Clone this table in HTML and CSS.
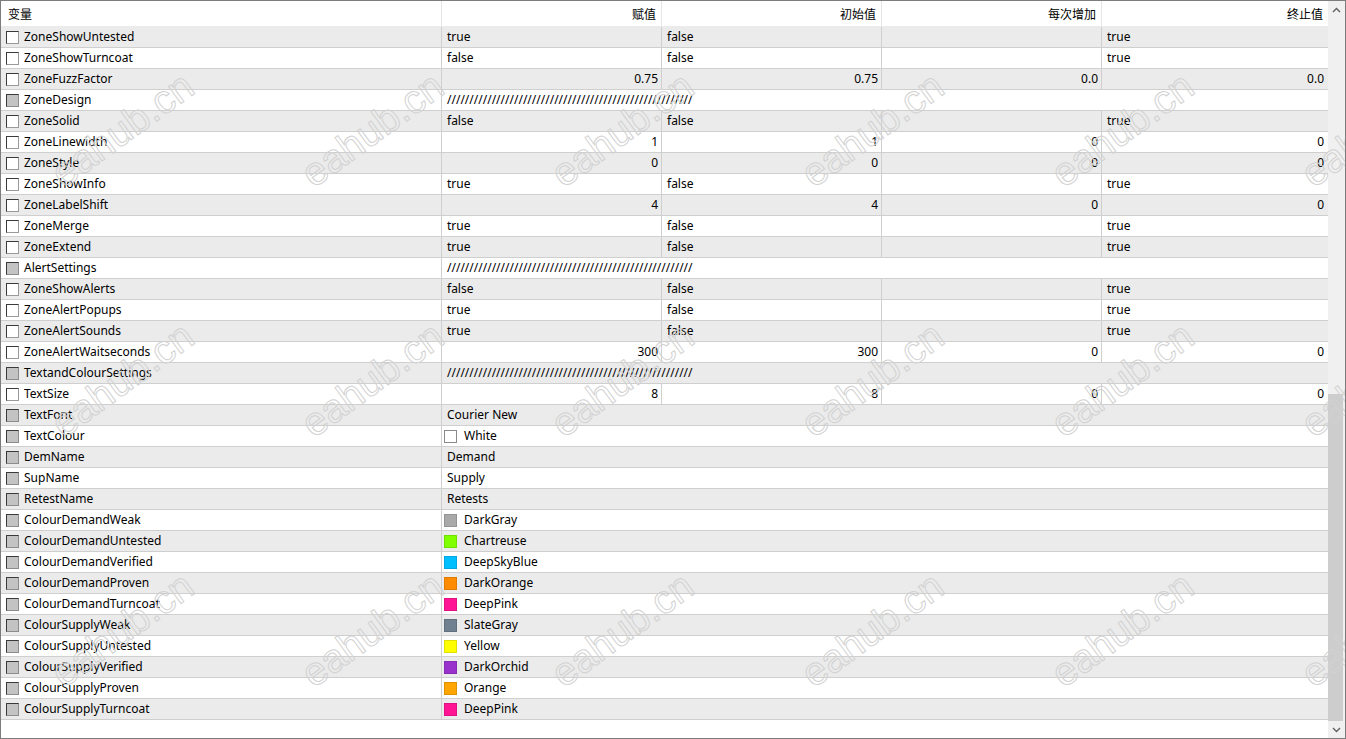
FILE: index.html
```html
<!DOCTYPE html>
<html>
<head>
<meta charset="utf-8">
<link rel="stylesheet" href="styles.css">
</head>
<body>
<div class="window">
  <div class="main">
    <div class="table">
      <div class="header">
        <div class="hc first">变量</div>
        <div class="hc">赋值</div>
        <div class="hc">初始值</div>
        <div class="hc">每次增加</div>
        <div class="hc last">终止值</div>
      </div>
      <div class="rows">
        <div class="row"><div class="c name"><span class="cb"></span>ZoneShowUntested</div><div class="c v">true</div><div class="c v">false</div><div class="c v"></div><div class="c v last">true</div></div>
        <div class="row"><div class="c name"><span class="cb"></span>ZoneShowTurncoat</div><div class="c v">false</div><div class="c v">false</div><div class="c v"></div><div class="c v last">true</div></div>
        <div class="row"><div class="c name"><span class="cb"></span>ZoneFuzzFactor</div><div class="c n">0.75</div><div class="c n">0.75</div><div class="c n">0.0</div><div class="c n last">0.0</div></div>
        <div class="row"><div class="c name"><span class="cb dis"></span>ZoneDesign</div><div class="c span">///////////////////////////////////////////////////////</div></div>
        <div class="row"><div class="c name"><span class="cb"></span>ZoneSolid</div><div class="c v">false</div><div class="c v">false</div><div class="c v"></div><div class="c v last">true</div></div>
        <div class="row"><div class="c name"><span class="cb"></span>ZoneLinewidth</div><div class="c n">1</div><div class="c n">1</div><div class="c n">0</div><div class="c n last">0</div></div>
        <div class="row"><div class="c name"><span class="cb"></span>ZoneStyle</div><div class="c n">0</div><div class="c n">0</div><div class="c n">0</div><div class="c n last">0</div></div>
        <div class="row"><div class="c name"><span class="cb"></span>ZoneShowInfo</div><div class="c v">true</div><div class="c v">false</div><div class="c v"></div><div class="c v last">true</div></div>
        <div class="row"><div class="c name"><span class="cb"></span>ZoneLabelShift</div><div class="c n">4</div><div class="c n">4</div><div class="c n">0</div><div class="c n last">0</div></div>
        <div class="row"><div class="c name"><span class="cb"></span>ZoneMerge</div><div class="c v">true</div><div class="c v">false</div><div class="c v"></div><div class="c v last">true</div></div>
        <div class="row"><div class="c name"><span class="cb"></span>ZoneExtend</div><div class="c v">true</div><div class="c v">false</div><div class="c v"></div><div class="c v last">true</div></div>
        <div class="row"><div class="c name"><span class="cb dis"></span>AlertSettings</div><div class="c span">///////////////////////////////////////////////////////</div></div>
        <div class="row"><div class="c name"><span class="cb"></span>ZoneShowAlerts</div><div class="c v">false</div><div class="c v">false</div><div class="c v"></div><div class="c v last">true</div></div>
        <div class="row"><div class="c name"><span class="cb"></span>ZoneAlertPopups</div><div class="c v">true</div><div class="c v">false</div><div class="c v"></div><div class="c v last">true</div></div>
        <div class="row"><div class="c name"><span class="cb"></span>ZoneAlertSounds</div><div class="c v">true</div><div class="c v">false</div><div class="c v"></div><div class="c v last">true</div></div>
        <div class="row"><div class="c name"><span class="cb"></span>ZoneAlertWaitseconds</div><div class="c n">300</div><div class="c n">300</div><div class="c n">0</div><div class="c n last">0</div></div>
        <div class="row"><div class="c name"><span class="cb dis"></span>TextandColourSettings</div><div class="c span">///////////////////////////////////////////////////////</div></div>
        <div class="row"><div class="c name"><span class="cb"></span>TextSize</div><div class="c n">8</div><div class="c n">8</div><div class="c n">0</div><div class="c n last">0</div></div>
        <div class="row"><div class="c name"><span class="cb dis"></span>TextFont</div><div class="c span">Courier New</div></div>
        <div class="row"><div class="c name"><span class="cb dis"></span>TextColour</div><div class="c span color"><span class="sw white"></span>White</div></div>
        <div class="row"><div class="c name"><span class="cb dis"></span>DemName</div><div class="c span">Demand</div></div>
        <div class="row"><div class="c name"><span class="cb dis"></span>SupName</div><div class="c span">Supply</div></div>
        <div class="row"><div class="c name"><span class="cb dis"></span>RetestName</div><div class="c span">Retests</div></div>
        <div class="row"><div class="c name"><span class="cb dis"></span>ColourDemandWeak</div><div class="c span color"><span class="sw darkgray"></span>DarkGray</div></div>
        <div class="row"><div class="c name"><span class="cb dis"></span>ColourDemandUntested</div><div class="c span color"><span class="sw chartreuse"></span>Chartreuse</div></div>
        <div class="row"><div class="c name"><span class="cb dis"></span>ColourDemandVerified</div><div class="c span color"><span class="sw deepskyblue"></span>DeepSkyBlue</div></div>
        <div class="row"><div class="c name"><span class="cb dis"></span>ColourDemandProven</div><div class="c span color"><span class="sw darkorange"></span>DarkOrange</div></div>
        <div class="row"><div class="c name"><span class="cb dis"></span>ColourDemandTurncoat</div><div class="c span color"><span class="sw deeppink"></span>DeepPink</div></div>
        <div class="row"><div class="c name"><span class="cb dis"></span>ColourSupplyWeak</div><div class="c span color"><span class="sw slategray"></span>SlateGray</div></div>
        <div class="row"><div class="c name"><span class="cb dis"></span>ColourSupplyUntested</div><div class="c span color"><span class="sw yellow"></span>Yellow</div></div>
        <div class="row"><div class="c name"><span class="cb dis"></span>ColourSupplyVerified</div><div class="c span color"><span class="sw darkorchid"></span>DarkOrchid</div></div>
        <div class="row"><div class="c name"><span class="cb dis"></span>ColourSupplyProven</div><div class="c span color"><span class="sw orange"></span>Orange</div></div>
        <div class="row"><div class="c name"><span class="cb dis"></span>ColourSupplyTurncoat</div><div class="c span color"><span class="sw deeppink"></span>DeepPink</div></div>
      </div>
    </div>
    <div class="scrollbar">
      <div class="sbtn"><svg width="9" height="6" viewBox="0 0 9 6"><path d="M1 5 L4.5 1.5 L8 5" fill="none" stroke="#606060" stroke-width="1.4"/></svg></div>
      <div class="track"><div class="thumb"></div></div>
      <div class="sbtn"><svg width="9" height="6" viewBox="0 0 9 6"><path d="M1 1 L4.5 4.5 L8 1" fill="none" stroke="#606060" stroke-width="1.4"/></svg></div>
    </div>
  </div>
  <div class="watermarks">
    <div class="wm"><span>eahub.cn</span></div><div class="wm"><span>eahub.cn</span></div><div class="wm"><span>eahub.cn</span></div><div class="wm"><span>eahub.cn</span></div><div class="wm"><span>eahub.cn</span></div><div class="wm"><span>eahub.cn</span></div>
    <div class="wm"><span>eahub.cn</span></div><div class="wm"><span>eahub.cn</span></div><div class="wm"><span>eahub.cn</span></div><div class="wm"><span>eahub.cn</span></div><div class="wm"><span>eahub.cn</span></div><div class="wm"><span>eahub.cn</span></div>
    <div class="wm"><span>eahub.cn</span></div><div class="wm"><span>eahub.cn</span></div><div class="wm"><span>eahub.cn</span></div><div class="wm"><span>eahub.cn</span></div><div class="wm"><span>eahub.cn</span></div><div class="wm"><span>eahub.cn</span></div>
  </div>
</div>
</body>
</html>
```

FILE: styles.css
```css
html, body {
  margin: 0;
  padding: 0;
  background: #ffffff;
}

.window {
  position: relative;
  width: 1346px;
  height: 739px;
  box-sizing: border-box;
  border: 1px solid #7c7c7c;
  overflow: hidden;
  font-family: "Noto Sans", "Noto Sans CJK SC", sans-serif;
  font-size: 12px;
  color: #000;
}

.main {
  display: flex;
  height: 100%;
}

.table {
  width: 1327px;
  flex: 0 0 1327px;
  display: flex;
  flex-direction: column;
}

.header {
  display: grid;
  grid-template-columns: 441px 220px 220px 220px 226px;
  height: 25px;
  flex: 0 0 25px;
  background: #fff;
}

.hc {
  font-family: "Noto Sans CJK SC", "Noto Sans", sans-serif;
  font-size: 12px;
  line-height: 25px;
  text-align: right;
  padding-right: 5px;
  border-right: 1px solid #e5e5e5;
  box-sizing: border-box;
}

.hc.first {
  text-align: left;
  padding-left: 7px;
}

.hc.last {
  border-right: none;
}

.rows {
  display: flex;
  flex-direction: column;
  border-top: 1px solid #ebebeb;
}

.row {
  display: grid;
  grid-template-columns: 441px 220px 220px 220px 226px;
  height: 21px;
  box-sizing: border-box;
  border-bottom: 1px solid #cfcfcf;
  background: #fff;
}

.row:nth-child(odd) {
  background: #ebebeb;
}

.c {
  height: 20px;
  line-height: 20px;
  box-sizing: border-box;
  border-right: 1px solid #cfcfcf;
  white-space: nowrap;
  overflow: hidden;
}

.c.last {
  border-right: none;
}

.name {
  display: flex;
  align-items: center;
  padding-left: 5px;
}

.v {
  padding-left: 5px;
}

.n {
  text-align: right;
  padding-right: 3px;
}

.n.last {
  padding-right: 4px;
}

.span {
  grid-column: 2 / -1;
  border-right: none;
  padding-left: 5px;
  overflow: visible;
}

.span.color {
  display: flex;
  align-items: center;
  padding-left: 2px;
}

.cb {
  width: 13px;
  height: 13px;
  box-sizing: border-box;
  border: 1px solid;
  border-color: #3a3a3a #9a9a9a #9a9a9a #3a3a3a;
  background: #fff;
  margin-right: 5px;
  margin-top: 1px;
  flex: 0 0 auto;
}

.cb.dis {
  background: #c3c3c3;
  border-color: #3a3a3a #8c8c8c #8c8c8c #3a3a3a;
}

.sw {
  width: 13px;
  height: 13px;
  box-sizing: border-box;
  border: 1px solid rgba(0, 0, 0, 0.12);
  margin-right: 7px;
  flex: 0 0 auto;
}

.sw.white { background: #fff; border-color: #8a8a8a; }
.sw.darkgray { background: #a9a9a9; }
.sw.chartreuse { background: #7fff00; }
.sw.deepskyblue { background: #00bfff; }
.sw.darkorange { background: #ff8c00; }
.sw.deeppink { background: #ff1493; }
.sw.slategray { background: #708090; }
.sw.yellow { background: #ffff00; }
.sw.darkorchid { background: #9932cc; }
.sw.orange { background: #ffa500; }

.scrollbar {
  flex: 0 0 17px;
  width: 17px;
  background: #f0f0f0;
  display: flex;
  flex-direction: column;
}

.sbtn {
  height: 17px;
  flex: 0 0 17px;
  display: flex;
  align-items: center;
  justify-content: center;
}

.track {
  flex: 1;
  display: flex;
  flex-direction: column;
  justify-content: flex-end;
}

.thumb {
  height: 327px;
  margin-right: 2px;
  background: #cdcdcd;
}

.watermarks {
  position: absolute;
  left: -4px;
  top: 3px;
  display: grid;
  grid-template-columns: repeat(6, 250px);
  grid-template-rows: repeat(3, 250px);
  pointer-events: none;
}

.wm {
  display: flex;
  align-items: center;
  justify-content: center;
}

.wm span {
  display: block;
  font-family: "Liberation Sans", sans-serif;
  font-size: 40px;
  color: transparent;
  -webkit-text-stroke: 1px #d2d2d2;
  transform: rotate(-36deg);
  white-space: nowrap;
}
```
